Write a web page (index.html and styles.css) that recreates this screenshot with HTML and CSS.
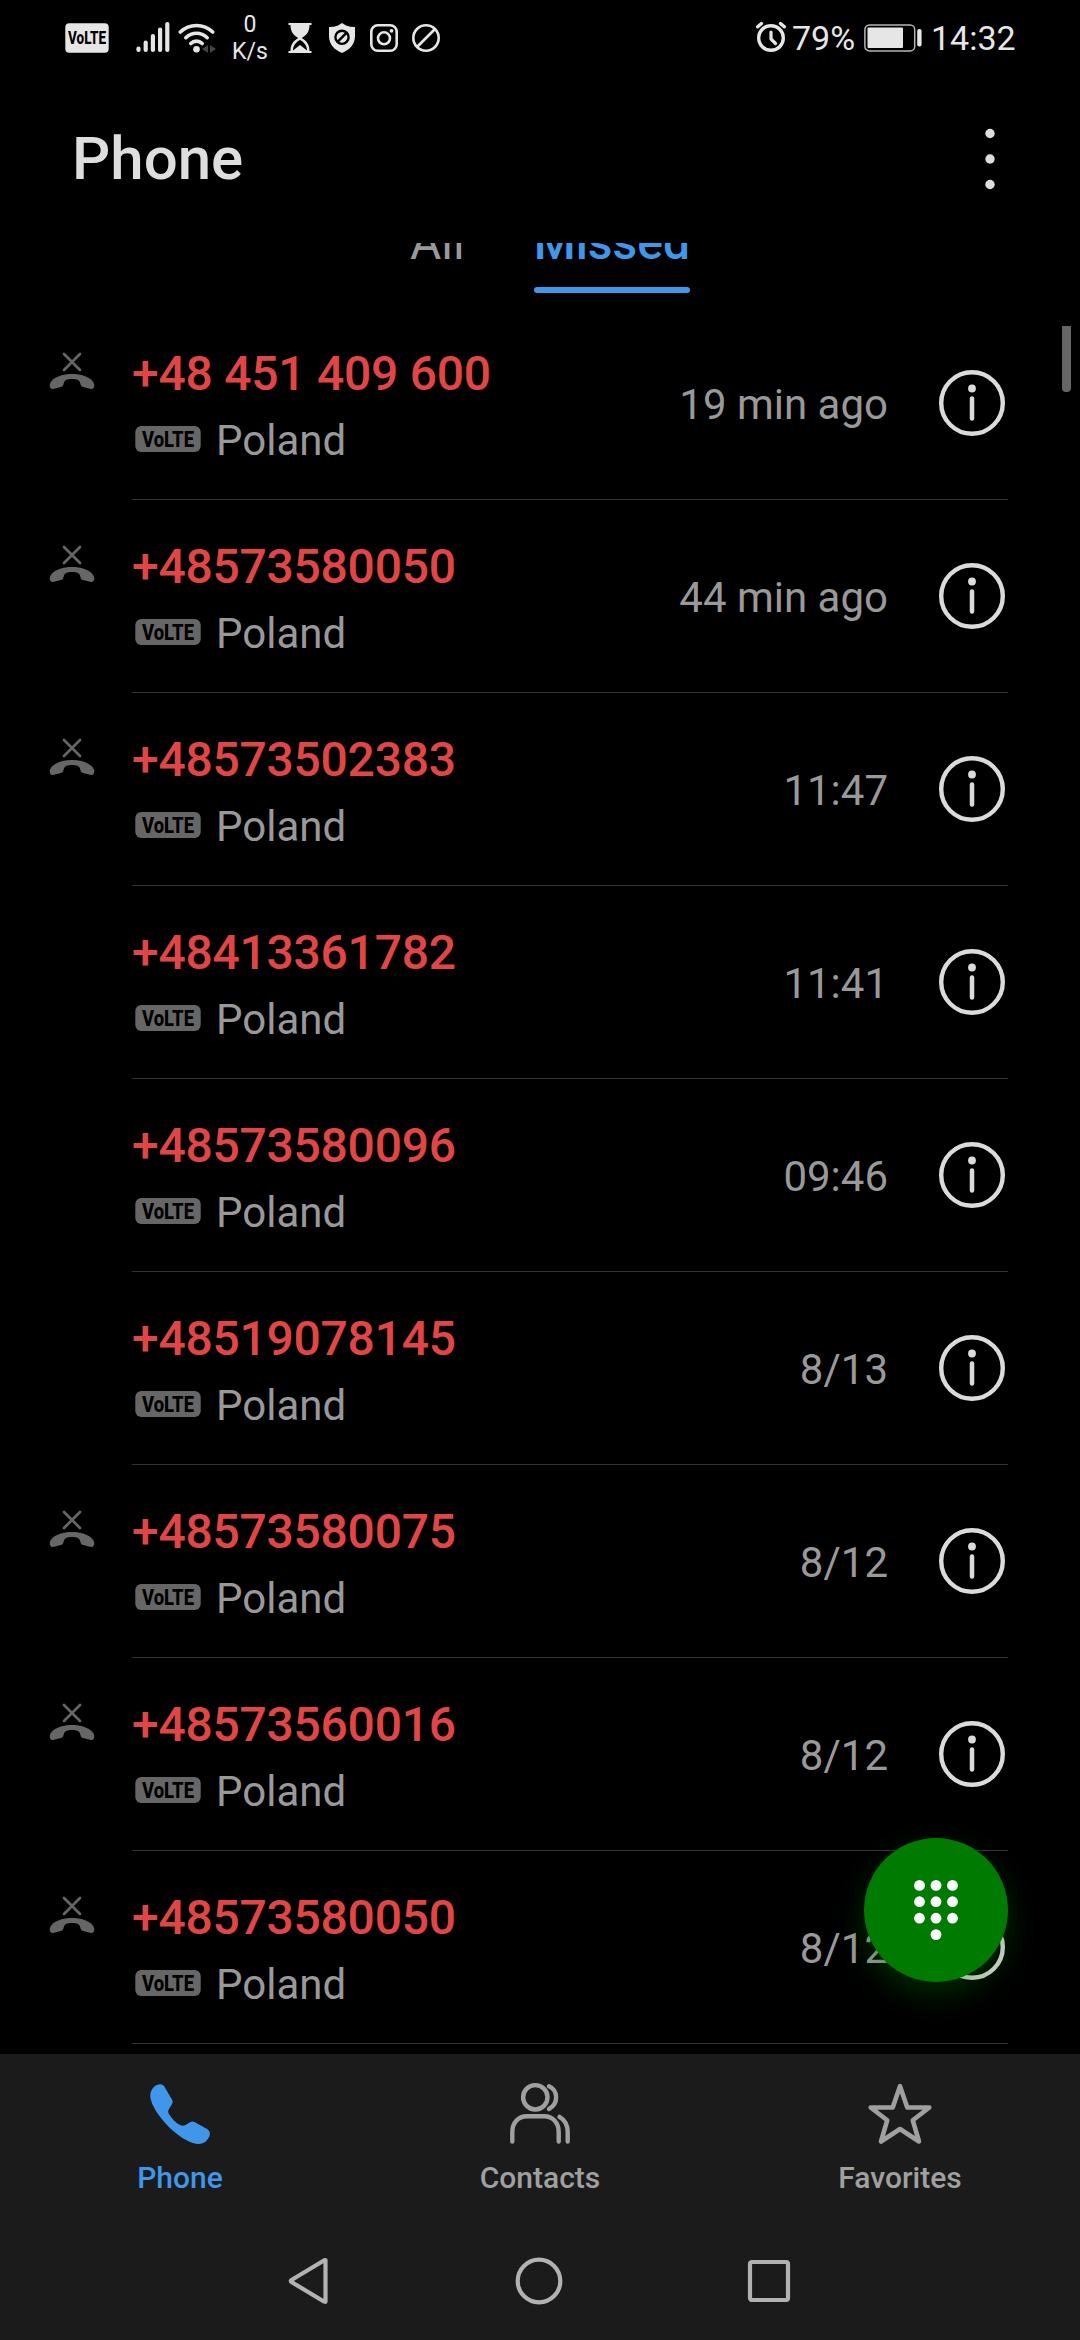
FILE: index.html
```html
<!DOCTYPE html>
<html lang="en">

<head>
    <meta charset="UTF-8">
    <meta name="viewport" content="width=device-width, initial-scale=1.0">
    <title>Phone</title>
    <link rel="stylesheet" href="styles.css">
</head>

<body>
    <!-- shared icons -->
    <svg class="sprite">
        <symbol id="missed" viewBox="0 0 46 38">
            <path d="M15 2L31 18M31 2L15 18" fill="none" stroke="#666" stroke-width="2.700" stroke-linecap="round" />
            <path d="M23 22C32 22 39 24.500 43 28.500C45.500 31 46 34 44.500 36C44 36.900 43 37.200 42 37L34 35C32.300 34.500 31.700 33.500 31.300 31.500C31 29.500 30 28.500 28.500 27.700C26 26.700 20 26.700 17.500 27.700C16 28.500 15 29.500 14.700 31.500C14.300 33.500 13.700 34.500 12 35L4 37C3 37.200 2 36.900 1.500 36C0 34 .5 31 3 28.500C7 24.500 14 22 23 22Z" fill="#666" />
        </symbol>
        <symbol id="volte" viewBox="0 0 66 26">
            <rect x="0.300" width="65.400" height="26" rx="6" fill="#666" />
            <text x="7" y="20.500" font-size="21.500" textLength="52" lengthAdjust="spacingAndGlyphs">VoLTE</text>
        </symbol>
        <symbol id="info" viewBox="0 0 66 66">
            <circle cx="33" cy="33" r="30.800" fill="none" stroke="#dbdbdb" stroke-width="4.400" />
            <circle cx="33" cy="18.500" r="3.900" fill="#dbdbdb" />
            <path d="M33 28.500V48.500" stroke="#dbdbdb" stroke-width="4.500" stroke-linecap="round" />
        </symbol>
    </svg>

    <div class="status">
        <svg class="st-volte" width="44" height="30" viewBox="0 0 44 30">
            <rect x="0.300" y="0.300" width="43.400" height="29.400" rx="4" fill="#e6e6e6" />
            <text x="3" y="21.300" font-size="18.500" textLength="38" lengthAdjust="spacingAndGlyphs">VoLTE</text>
        </svg>
        <svg class="st-signal" width="34" height="32" viewBox="0 0 34 32">
            <path d="M2.500 27.500V29M9.700 21.500V29M16.900 15V29M24.100 8.500V29M31.300 3V29" stroke="#e6e6e6" stroke-width="4.200" stroke-linecap="round" />
        </svg>
        <svg class="st-wifi" width="38" height="32" viewBox="0 0 38 32">
            <g fill="none" stroke="#e6e6e6" stroke-width="3.600" stroke-linecap="round">
                <path d="M2.300 10C11.500 1.300 25.500 1.300 34.700 10" />
                <path d="M7.800 15.700C14 9.800 23 9.800 29.200 15.700" />
                <path d="M12.800 21.500C16 18.300 21 18.300 24.200 21.500" />
            </g>
            <circle cx="18.500" cy="27.200" r="3.300" fill="#e6e6e6" />
            <path d="M24 27L30 23V31ZM38 27L32 23V31Z" fill="#444" />
        </svg>
        <div class="st-speed"><span>0</span><span>K/s</span></div>
        <svg class="st-glass" width="24" height="30" viewBox="0 0 24 30">
            <path d="M.5 0H23.500V2H21.500C21.500 8 19 12 13.800 15C19 18 21.500 22 21.500 28H23.500V30H.5V28H2.500C2.500 22 5 18 10.200 15C5 12 2.500 8 2.500 2H.5Z" fill="#e6e6e6" />
            <path d="M5 27.500C5 22.500 8 19 12 17C16 19 19 22.500 19 27.500L12 22Z" fill="#000" />
        </svg>
        <svg class="st-shield" width="28" height="30" viewBox="0 0 28 30">
            <path d="M14 0L18 2.500Q22 4 27 4V13C27 22 21 27 14 30C7 27 1 22 1 13V4Q6 4 10 2.500Z" fill="#e6e6e6" />
            <circle cx="14" cy="14.300" r="6.600" fill="none" stroke="#000" stroke-width="2.400" />
            <path d="M9.500 18.800L18.500 9.800" stroke="#000" stroke-width="2.400" />
        </svg>
        <svg class="st-insta" width="28" height="28" viewBox="0 0 28 28">
            <g fill="none" stroke="#e6e6e6" stroke-width="2.600">
                <rect x="1.300" y="1.300" width="25.400" height="25.400" rx="6.500" />
                <circle cx="14" cy="14.300" r="6" />
            </g>
            <circle cx="21.500" cy="6.800" r="1.900" fill="#e6e6e6" />
        </svg>
        <svg class="st-ban" width="28" height="28" viewBox="0 0 28 28">
            <g fill="none" stroke="#e6e6e6" stroke-width="2.600">
                <circle cx="14" cy="14" r="12.700" />
                <path d="M5 23L23 5" />
            </g>
        </svg>
        <svg class="st-alarm" width="32" height="32" viewBox="0 0 32 32">
            <g fill="none" stroke="#e6e6e6" stroke-linecap="round">
                <circle cx="16" cy="17" r="12.300" stroke-width="3.400" />
                <path d="M2.700 5.800L6.500 2.500M29.300 5.800L25.500 2.500" stroke-width="3.400" />
                <path d="M16 11V18L20.500 22.500" stroke-width="3.200" stroke-linejoin="round" />
            </g>
        </svg>
        <span class="st-percent">79%</span>
        <svg class="st-battery" width="58" height="28" viewBox="0 0 58 28">
            <rect x="0.900" y="0.900" width="49.800" height="26" rx="4.500" fill="none" stroke="#b5b5b5" stroke-width="1.500" />
            <rect x="3.500" y="3.500" width="35.500" height="20.500" rx="1" fill="#e6e6e6" />
            <rect x="53.200" y="5" width="4.400" height="17.500" rx="2" fill="#e6e6e6" />
        </svg>
        <span class="st-time">14:32</span>
    </div>

    <div class="header">
        <h1>Phone</h1>
        <svg width="12" height="62" viewBox="0 0 12 62">
            <g fill="#dedede">
                <circle cx="6" cy="5.500" r="4.700" />
                <circle cx="6" cy="31" r="4.700" />
                <circle cx="6" cy="56.500" r="4.700" />
            </g>
        </svg>
    </div>

    <div class="tabs">
        <a class="tab">All</a>
        <a class="tab select">Missed</a>
    </div>

    <ul class="calls">
        <li>
            <div class="flag"><svg><use href="#missed" /></svg></div>
            <div class="call">
                <div class="who">
                    <p class="number">+48 451 409 600</p>
                    <p class="place"><svg><use href="#volte" /></svg>Poland</p>
                </div>
                <span class="when">19 min ago</span>
                <svg class="info"><use href="#info" /></svg>
            </div>
        </li>
        <li>
            <div class="flag"><svg><use href="#missed" /></svg></div>
            <div class="call">
                <div class="who">
                    <p class="number">+48573580050</p>
                    <p class="place"><svg><use href="#volte" /></svg>Poland</p>
                </div>
                <span class="when">44 min ago</span>
                <svg class="info"><use href="#info" /></svg>
            </div>
        </li>
        <li>
            <div class="flag"><svg><use href="#missed" /></svg></div>
            <div class="call">
                <div class="who">
                    <p class="number">+48573502383</p>
                    <p class="place"><svg><use href="#volte" /></svg>Poland</p>
                </div>
                <span class="when">11:47</span>
                <svg class="info"><use href="#info" /></svg>
            </div>
        </li>
        <li>
            <div class="flag"></div>
            <div class="call">
                <div class="who">
                    <p class="number">+48413361782</p>
                    <p class="place"><svg><use href="#volte" /></svg>Poland</p>
                </div>
                <span class="when">11:41</span>
                <svg class="info"><use href="#info" /></svg>
            </div>
        </li>
        <li>
            <div class="flag"></div>
            <div class="call">
                <div class="who">
                    <p class="number">+48573580096</p>
                    <p class="place"><svg><use href="#volte" /></svg>Poland</p>
                </div>
                <span class="when">09:46</span>
                <svg class="info"><use href="#info" /></svg>
            </div>
        </li>
        <li>
            <div class="flag"></div>
            <div class="call">
                <div class="who">
                    <p class="number">+48519078145</p>
                    <p class="place"><svg><use href="#volte" /></svg>Poland</p>
                </div>
                <span class="when">8/13</span>
                <svg class="info"><use href="#info" /></svg>
            </div>
        </li>
        <li>
            <div class="flag"><svg><use href="#missed" /></svg></div>
            <div class="call">
                <div class="who">
                    <p class="number">+48573580075</p>
                    <p class="place"><svg><use href="#volte" /></svg>Poland</p>
                </div>
                <span class="when">8/12</span>
                <svg class="info"><use href="#info" /></svg>
            </div>
        </li>
        <li>
            <div class="flag"><svg><use href="#missed" /></svg></div>
            <div class="call">
                <div class="who">
                    <p class="number">+48573560016</p>
                    <p class="place"><svg><use href="#volte" /></svg>Poland</p>
                </div>
                <span class="when">8/12</span>
                <svg class="info"><use href="#info" /></svg>
            </div>
        </li>
        <li>
            <div class="flag"><svg><use href="#missed" /></svg></div>
            <div class="call">
                <div class="who">
                    <p class="number">+48573580050</p>
                    <p class="place"><svg><use href="#volte" /></svg>Poland</p>
                </div>
                <span class="when">8/12</span>
                <svg class="info"><use href="#info" /></svg>
            </div>
        </li>
    </ul>

    <div class="scrollbar"></div>

    <div class="dial">
        <svg width="44" height="60" viewBox="0 0 44 60">
            <g fill="#fff">
                <circle cx="5.500" cy="5.400" r="5.400" />
                <circle cx="22" cy="5.400" r="5.400" />
                <circle cx="38.500" cy="5.400" r="5.400" />
                <circle cx="5.500" cy="21.700" r="5.400" />
                <circle cx="22" cy="21.700" r="5.400" />
                <circle cx="38.500" cy="21.700" r="5.400" />
                <circle cx="5.500" cy="38.200" r="5.400" />
                <circle cx="22" cy="38.200" r="5.400" />
                <circle cx="38.500" cy="38.200" r="5.400" />
                <circle cx="22" cy="54.600" r="5.400" />
            </g>
        </svg>
    </div>

    <div class="bottom">
        <div class="menu">
            <a class="select">
                <svg width="72" height="72" viewBox="0 0 72 72">
                    <path d="M6.300 16.500C7 10 12 6.500 16 6.300C18 6.300 19.300 7 20.300 8.500L28 21.500C29 23.300 28.800 24.500 28 26L24.700 31.500C24 33 24 34.500 25 36C28 41 32 45 36 47C37.800 48 39.800 48 41.500 47L46 44.200C47.500 43.300 49 43.300 50.500 44L63.500 51.300C66 53 66.300 55.500 65.500 58C63.500 63 59.500 66 54.500 66C48 66 37 60.500 27 51C15 39.500 5.500 25 6.300 16.500Z" fill="#4096e8" />
                </svg>
                <span>Phone</span>
            </a>
            <a>
                <svg width="72" height="72" viewBox="0 0 72 72">
                    <g fill="none" stroke="#a0a0a0" stroke-width="4.400" stroke-linecap="round">
                        <circle cx="31.300" cy="19.300" r="12.200" />
                        <path d="M45 8.300C54.500 12.500 54.500 26 45 31" />
                        <path d="M8.300 63.500V54C8.300 45 14 38.300 23 38.300H40C49 38.300 54.700 45 54.700 54V63.500" />
                        <path d="M55.500 38.800C61 42 63.700 47 63.700 54V63.500" />
                    </g>
                </svg>
                <span>Contacts</span>
            </a>
            <a>
                <svg width="72" height="72" viewBox="0 0 72 72">
                    <path d="M36 8.200L43.300 29.500H65.300L48.800 42.300L55 63.500L36 51L17 63.500L23.200 42.300L6.700 29.500H28.700Z" fill="none" stroke="#a0a0a0" stroke-width="4.600" stroke-linejoin="round" />
                </svg>
                <span>Favorites</span>
            </a>
        </div>
        <div class="keys">
            <svg width="46" height="50" viewBox="0 0 46 50">
                <path d="M39.500 4.300V45.700Q39.500 46 37.500 45.300L5.500 26Q4 25 5.500 24L37.500 4.700Q39.500 3.500 39.500 4.300Z" fill="none" stroke="#b2b2b2" stroke-width="4.200" stroke-linejoin="round" />
            </svg>
            <svg width="50" height="50" viewBox="0 0 50 50">
                <circle cx="25" cy="25" r="21.300" fill="none" stroke="#b2b2b2" stroke-width="4.200" />
            </svg>
            <svg width="46" height="50" viewBox="0 0 46 50">
                <rect x="4" y="6" width="38" height="38" rx="2" fill="none" stroke="#b2b2b2" stroke-width="4.200" />
            </svg>
        </div>
    </div>
</body>

</html>
```

FILE: styles.css
```css
* {
    margin: 0;
    padding: 0;
    box-sizing: border-box;
    list-style: none;
}

body {
    position: relative;
    width: 1080px;
    height: 2340px;
    display: flex;
    flex-direction: column;
    background-color: #000;
    font-family: Roboto, "Liberation Sans", sans-serif;
    overflow: hidden;
}

svg {
    display: block;
    flex: none;
}

svg text {
    font-family: Roboto, "Liberation Sans", sans-serif;
    font-weight: 800;
    fill: #000;
}

.sprite {
    display: none;
}

/* status bar */
.status {
    height: 76px;
    padding-left: 65px;
    display: flex;
    align-items: center;
    color: #e6e6e6;
    font-size: 34px;
    line-height: 40px;
}

.st-signal {
    margin-left: 27px;
    margin-bottom: 2px;
}

.st-wifi {
    margin-left: 8px;
    margin-bottom: 1px;
}

.st-speed {
    width: 50px;
    margin-left: 9px;
    display: flex;
    flex-direction: column;
    text-align: center;
    font-size: 23px;
    line-height: 27px;
}

.st-glass {
    margin-left: 13px;
}

.st-shield {
    margin-left: 16px;
}

.st-insta {
    margin-left: 14px;
}

.st-ban {
    margin-left: 14px;
}

.st-alarm {
    margin-left: auto;
    margin-bottom: 2px;
}

.st-percent {
    width: 64px;
    margin-left: 5px;
}

.st-battery {
    margin-left: 8px;
    margin-bottom: 1px;
}

.st-time {
    width: 90px;
    margin-left: 9px;
    margin-right: 59px;
}

/* title bar */
.header {
    height: 167px;
    padding: 0 84px 2px 72px;
    display: flex;
    align-items: center;
    justify-content: space-between;
    color: #dedede;
}

.header h1 {
    font-size: 60px;
    line-height: 70px;
    font-weight: 500;
}

/* tabs, scrolled partly under the title bar */
.tabs {
    height: 64px;
    padding-left: 410px;
    display: flex;
    gap: 69px;
    overflow: hidden;
}

.tab {
    margin-top: -28px;
    font-size: 48px;
    line-height: 56px;
    color: #999;
}

.tabs .select {
    color: #4096e8;
    font-weight: 500;
}

.tabs .select::after {
    content: "";
    display: block;
    height: 6px;
    margin-top: 16px;
    border-radius: 3px;
    background-color: #4096e8;
}

/* call log */
.calls {
    height: 1747px;
}

.calls li {
    height: 193px;
    padding-right: 72px;
    display: flex;
}

.flag {
    width: 132px;
    padding: 45px 0 0 49px;
}

.flag svg {
    width: 46px;
    height: 38px;
}

.call {
    flex: 1;
    padding-right: 3px;
    display: flex;
    align-items: center;
    border-bottom: 1px solid #333;
}

.who {
    flex: 1;
    align-self: flex-start;
    padding-top: 39px;
}

.number {
    font-size: 48px;
    line-height: 56px;
    font-weight: 500;
    letter-spacing: -0.25px;
    color: #e14646;
}

.place {
    margin-top: 14px;
    display: flex;
    align-items: center;
    font-size: 42px;
    line-height: 50px;
    color: #999;
}

.place svg {
    width: 66px;
    height: 26px;
    margin: 0 15px 4px 3px;
}

.when {
    padding-top: 3px;
    margin-right: 51px;
    font-size: 42px;
    line-height: 50px;
    color: #999;
}

.info {
    width: 66px;
    height: 66px;
}

.scrollbar {
    position: absolute;
    top: 326px;
    left: 1062px;
    width: 9px;
    height: 66px;
    border-radius: 0 0 4px 4px;
    background-color: #666;
}

.dial {
    position: absolute;
    top: 1838px;
    left: 864px;
    width: 144px;
    height: 144px;
    padding-top: 42px;
    display: flex;
    justify-content: center;
    border-radius: 50%;
    background-color: #007a00;
    box-shadow: 0 12px 30px rgba(0, 122, 0, 0.35);
}

/* bottom menu and system keys */
.bottom {
    height: 286px;
    background-color: #1b1b1b;
}

.menu {
    height: 168px;
    padding-top: 24px;
    display: grid;
    grid-template-columns: repeat(3, 1fr);
}

.menu a {
    display: flex;
    flex-direction: column;
    align-items: center;
    gap: 10px;
    font-size: 30px;
    line-height: 36px;
    font-weight: 500;
    color: #a0a0a0;
}

.menu .select {
    color: #4096e8;
}

.keys {
    height: 118px;
    padding: 0 288px 0 286px;
    display: flex;
    align-items: center;
    justify-content: space-between;
}
```
